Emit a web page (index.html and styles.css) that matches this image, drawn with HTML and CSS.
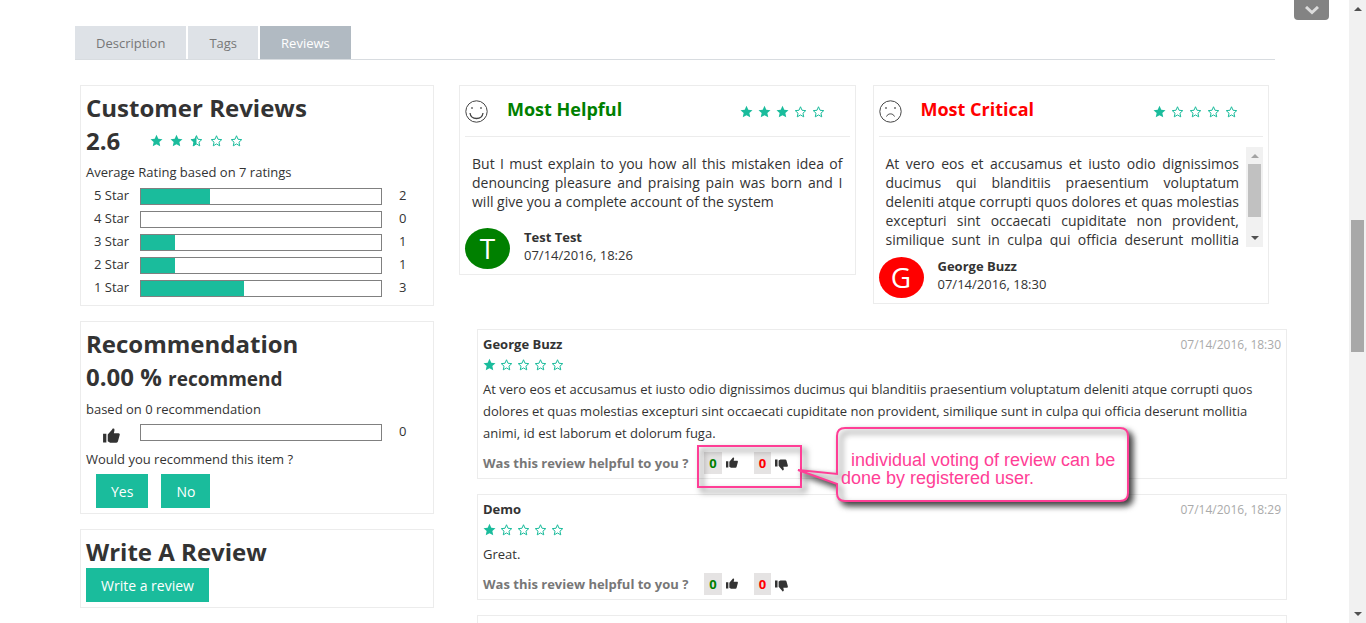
FILE: index.html
```html
<!DOCTYPE html>
<html lang="en">
<head>
    <meta charset="UTF-8">
    <meta name="viewport" content="width=device-width, initial-scale=1.0">
    <title>Product Reviews</title>
    <link rel="stylesheet" href="styles.css">
</head>
<body>
    <!-- shared icons -->
    <svg class="sprite" aria-hidden="true">
        <symbol id="star" viewBox="0 0 26 25">
            <path fill="currentColor" d="M13 1l3.6 8 8.4.9-6.300 5.800 1.800 8.500L13 19.900l-7.500 4.300 1.800-8.500L1 9.900 9.400 9z"/>
        </symbol>
        <symbol id="star-o" viewBox="0 0 26 25">
            <path fill="none" stroke="currentColor" stroke-width="2" d="M13 3l3 7 7.500.800-5.600 5.100 1.600 7.300L13 19.400l-6.500 3.800 1.600-7.300-5.600-5.100L10 10z"/>
        </symbol>
        <symbol id="star-half" viewBox="0 0 26 25">
            <path fill="none" stroke="currentColor" stroke-width="2" d="M13 3l3 7 7.500.800-5.600 5.100 1.600 7.300L13 19.400l-6.500 3.800 1.600-7.300-5.600-5.100L10 10z"/>
            <path fill="currentColor" d="M13 1v18.900l-7.500 4.300 1.800-8.500L1 9.900 9.400 9z"/>
        </symbol>
        <symbol id="thumb" viewBox="0 0 18 16">
            <path fill="currentColor" d="M0 6h3.500v9.500H0zM5 7l4.500-5.200C10 1 10.300.3 11.300.6c.9.300 1 1.300.8 2.200L11.500 5.500H16.500c1 0 1.500.8 1.300 1.700l-1.900 7c-.2.900-.8 1.500-1.700 1.500H7.500L5 14.200z"/>
        </symbol>
    </svg>

    <main class="page">
        <button type="button" class="toggle" aria-label="Expand">
            <svg viewBox="0 0 14 9"><path d="M1 1l6 5.500L13 1" fill="none" stroke="#dcdcdc" stroke-width="3"/></svg>
        </button>

        <nav class="tabs">
            <a href="#description">Description</a>
            <a href="#tags">Tags</a>
            <a href="#reviews" class="active">Reviews</a>
        </nav>

        <div class="reviews" id="reviews">
            <aside class="summary">
                <section class="card">
                    <h2>Customer Reviews</h2>
                    <div class="average">
                        <strong class="score">2.6</strong>
                        <span class="stars wide">
                            <svg><use href="#star"/></svg>
                            <svg><use href="#star"/></svg>
                            <svg><use href="#star-half"/></svg>
                            <svg><use href="#star-o"/></svg>
                            <svg><use href="#star-o"/></svg>
                        </span>
                    </div>
                    <p>Average Rating based on 7 ratings</p>
                    <ul class="ratings">
                        <li><span class="label">5 Star</span><span class="bar"><span class="fill" style="width: 28.6%"></span></span><span class="count">2</span></li>
                        <li><span class="label">4 Star</span><span class="bar"><span class="fill" style="width: 0%"></span></span><span class="count">0</span></li>
                        <li><span class="label">3 Star</span><span class="bar"><span class="fill" style="width: 14.3%"></span></span><span class="count">1</span></li>
                        <li><span class="label">2 Star</span><span class="bar"><span class="fill" style="width: 14.3%"></span></span><span class="count">1</span></li>
                        <li><span class="label">1 Star</span><span class="bar"><span class="fill" style="width: 42.9%"></span></span><span class="count">3</span></li>
                    </ul>
                </section>

                <section class="card recommendation">
                    <h2>Recommendation</h2>
                    <div class="average">
                        <strong class="score">0.00 % <small>recommend</small></strong>
                    </div>
                    <p>based on 0 recommendation</p>
                    <ul class="ratings">
                        <li><span class="label"><svg class="thumb-big"><use href="#thumb"/></svg></span><span class="bar"></span><span class="count">0</span></li>
                    </ul>
                    <p>Would you recommend this item ?</p>
                    <div class="choices">
                        <button type="button" class="btn">Yes</button>
                        <button type="button" class="btn">No</button>
                    </div>
                </section>

                <section class="card">
                    <h2>Write A Review</h2>
                    <button type="button" class="btn">Write a review</button>
                </section>
            </aside>

            <div class="content">
                <div class="highlights">
                    <section class="card helpful">
                        <header>
                            <svg class="face" viewBox="0 0 23 23" fill="none" stroke="#444">
                                <circle cx="11.500" cy="11.500" r="10.700"/>
                                <path d="M5 13c1 7.300 12 7.300 13 0" stroke-width="1.300"/>
                                <circle cx="7" cy="8" r=".5"/><circle cx="16" cy="8" r=".5"/>
                            </svg>
                            <h3>Most Helpful</h3>
                            <span class="stars">
                                <svg><use href="#star"/></svg>
                                <svg><use href="#star"/></svg>
                                <svg><use href="#star"/></svg>
                                <svg><use href="#star-o"/></svg>
                                <svg><use href="#star-o"/></svg>
                            </span>
                        </header>
                        <div class="quote">
                            <p>But I must explain to you how all this mistaken idea of denouncing pleasure and praising pain was born and I will give you a complete account of the system</p>
                        </div>
                        <footer>
                            <span class="avatar">T</span>
                            <div><strong>Test Test</strong><br>07/14/2016, 18:26</div>
                        </footer>
                    </section>

                    <section class="card critical">
                        <header>
                            <svg class="face" viewBox="0 0 23 23" fill="none" stroke="#444">
                                <circle cx="11.500" cy="11.500" r="10.700"/>
                                <path d="M7.500 16.500c1.500-3.500 6.500-3.500 8 0"/>
                                <circle cx="7" cy="8" r=".5"/><circle cx="16" cy="8" r=".5"/>
                            </svg>
                            <h3>Most Critical</h3>
                            <span class="stars">
                                <svg><use href="#star"/></svg>
                                <svg><use href="#star-o"/></svg>
                                <svg><use href="#star-o"/></svg>
                                <svg><use href="#star-o"/></svg>
                                <svg><use href="#star-o"/></svg>
                            </span>
                        </header>
                        <div class="quote">
                            <p>At vero eos et accusamus et iusto odio dignissimos ducimus qui blanditiis praesentium voluptatum deleniti atque corrupti quos dolores et quas molestias excepturi sint occaecati cupiditate non provident, similique sunt in culpa qui officia deserunt mollitia animi, id est laborum et dolorum fuga.</p>
                            <div class="scrollbar">
                                <svg class="arrow faded" viewBox="0 0 8 4"><path d="M0 4l4-4 4 4z"/></svg>
                                <span class="track"><span class="thumb"></span></span>
                                <svg class="arrow" viewBox="0 0 8 4"><path d="M0 0l4 4 4-4z"/></svg>
                            </div>
                        </div>
                        <footer>
                            <span class="avatar">G</span>
                            <div><strong>George Buzz</strong><br>07/14/2016, 18:30</div>
                        </footer>
                    </section>
                </div>

                <div class="list">
                    <article class="card review">
                        <header><strong>George Buzz</strong><time>07/14/2016, 18:30</time></header>
                        <span class="stars">
                            <svg><use href="#star"/></svg>
                            <svg><use href="#star-o"/></svg>
                            <svg><use href="#star-o"/></svg>
                            <svg><use href="#star-o"/></svg>
                            <svg><use href="#star-o"/></svg>
                        </span>
                        <p>At vero eos et accusamus et iusto odio dignissimos ducimus qui blanditiis praesentium voluptatum deleniti atque corrupti quos dolores et quas molestias excepturi sint occaecati cupiditate non provident, similique sunt in culpa qui officia deserunt mollitia animi, id est laborum et dolorum fuga.</p>
                        <div class="votes">
                            <span>Was this review helpful to you ?</span>
                            <span class="vote up">0</span>
                            <button type="button" aria-label="Helpful"><svg><use href="#thumb"/></svg></button>
                            <span class="vote down">0</span>
                            <button type="button" class="flip" aria-label="Not helpful"><svg><use href="#thumb"/></svg></button>
                        </div>
                        <div class="note">
                            <svg viewBox="0 0 450 90">
                                <rect class="line" x="6" y="24" width="103" height="41"/>
                                <path class="bubble" d="M153 6H428q8 0 8 8V71q0 8-8 8H153q-8 0-8-8V62L106 48l39 4V14q0-8 8-8z"/>
                                <path class="line" d="M153 6H428q8 0 8 8V71q0 8-8 8H153q-8 0-8-8V62L106 48l39 4V14q0-8 8-8z"/>
                            </svg>
                            <p>individual voting of review can be done by registered user.</p>
                        </div>
                    </article>

                    <article class="card review">
                        <header><strong>Demo</strong><time>07/14/2016, 18:29</time></header>
                        <span class="stars">
                            <svg><use href="#star"/></svg>
                            <svg><use href="#star-o"/></svg>
                            <svg><use href="#star-o"/></svg>
                            <svg><use href="#star-o"/></svg>
                            <svg><use href="#star-o"/></svg>
                        </span>
                        <p>Great.</p>
                        <div class="votes">
                            <span>Was this review helpful to you ?</span>
                            <span class="vote up">0</span>
                            <button type="button" aria-label="Helpful"><svg><use href="#thumb"/></svg></button>
                            <span class="vote down">0</span>
                            <button type="button" class="flip" aria-label="Not helpful"><svg><use href="#thumb"/></svg></button>
                        </div>
                    </article>

                    <article class="card review"></article>
                </div>
            </div>
        </div>
    </main>

    <div class="scrollbar main-scroll">
        <svg class="arrow" viewBox="0 0 8 4"><path d="M0 4l4-4 4 4z"/></svg>
        <span class="track"><span class="thumb"></span></span>
        <svg class="arrow" viewBox="0 0 8 4"><path d="M0 0l4 4 4-4z"/></svg>
    </div>
</body>
</html>
```
FILE: styles.css
```css
* {
    margin: 0;
    padding: 0;
    box-sizing: border-box;
}
body {
    font-family: 'Open Sans', sans-serif;
    font-size: 13px;
    line-height: 20px;
    color: #333;
    background: #fff;
    height: 100vh;
    display: flex;
    overflow: hidden;
}
svg {
    display: block;
}
button {
    border: none;
    font-family: inherit;
    cursor: pointer;
}
.sprite {
    position: absolute;
    width: 0;
    height: 0;
}
.page {
    flex: 1;
    min-width: 0;
    position: relative;
    padding: 26px 74px 0 75px;
}
.toggle {
    position: absolute;
    top: 0;
    right: 20px;
    width: 35px;
    height: 20px;
    display: flex;
    justify-content: center;
    align-items: center;
    background: #838383;
    border-radius: 0 0 4px 4px;
}
.toggle svg {
    width: 14px;
    height: 9px;
}

/* tabs */
.tabs {
    display: flex;
    gap: 2px;
    border-bottom: 1px solid #d8dce0;
}
.tabs a {
    padding: 1px 21px 0;
    line-height: 32px;
    color: #777;
    background: #dee2e7;
    text-decoration: none;
}
.tabs a.active {
    color: #fff;
    background: #b1bac2;
}

/* columns */
.reviews {
    display: grid;
    grid-template-columns: 354fr 828fr;
    gap: 25px;
    margin: 25px -12px 0 5px;
    align-items: start;
}
.summary {
    display: grid;
    gap: 15px;
}
.card {
    border: 1px solid #ececec;
    padding: 5px;
}
h2, .score {
    font-size: 24px;
    font-weight: 700;
    line-height: 33px;
}
.score small {
    font-size: 19px;
}

/* left column */
.average {
    display: flex;
    align-items: center;
    gap: 30px;
    margin-bottom: 5px;
}
.ratings {
    list-style: none;
    padding-top: 3px;
}
.recommendation .average {
    margin-bottom: 3px;
}
.recommendation .ratings {
    padding: 2px 0 5px;
}
.ratings li {
    display: grid;
    grid-template-columns: 54px 242px 1fr;
    height: 23px;
}
.label {
    padding-left: 8px;
}
.bar {
    height: 17px;
    margin-top: 3px;
    border: 1px solid #808080;
}
.fill {
    display: block;
    height: 100%;
    background: #1abc9c;
}
.count {
    padding-left: 17px;
}
.thumb-big {
    width: 17px;
    height: 15px;
    margin: 7px 0 0 9px;
}
.btn {
    height: 34px;
    padding: 0 15px;
    font-size: 14px;
    color: #fff;
    background: #1abc9c;
}
.choices {
    display: flex;
    gap: 13px;
    padding: 5px 10px 0;
}

/* stars */
.stars {
    display: flex;
    gap: 5px;
    color: #1abc9c;
}
.stars.wide {
    gap: 7px;
}
.stars svg {
    width: 13px;
    height: 13px;
}

/* most helpful / most critical */
.highlights {
    display: grid;
    grid-template-columns: 1fr 1fr;
    gap: 17px;
    align-items: start;
    margin-right: 18px;
}
.highlights header {
    display: flex;
    align-items: center;
    height: 46px;
    padding-bottom: 5px;
    border-bottom: 1px solid #ececec;
}
.highlights .stars {
    margin: 0 25px 0 auto;
}
.face {
    width: 23px;
    height: 23px;
    margin-right: 19px;
}
h3 {
    font-size: 18px;
    font-weight: 700;
    padding-bottom: 4px;
}
.helpful h3 {
    color: #008000;
}
.critical h3 {
    color: #f00;
}
.quote {
    display: flex;
    max-height: 100px;
    margin: 10px 0;
}
.quote p {
    flex: 1;
    padding: 7px;
    font-size: 14px;
    line-height: 19px;
    text-align: justify;
    overflow-y: auto;
    scrollbar-width: none;
}
.highlights footer {
    display: flex;
    gap: 14px;
    line-height: 18px;
}
.avatar {
    width: 45px;
    height: 41px;
    border-radius: 50%;
    font-size: 28px;
    line-height: 41px;
    text-align: center;
    color: #fff;
    background: #008000;
}
.critical .avatar {
    background: #f00;
}
strong {
    font-weight: 700;
}

/* review list */
.list {
    display: grid;
    gap: 15px;
    padding: 25px 0 0 18px;
}
.review {
    position: relative;
    padding-bottom: 4px;
    line-height: 22px;
}
.review header {
    display: flex;
    justify-content: space-between;
    align-items: baseline;
    height: 18px;
    line-height: 18px;
}
.review time {
    font-size: 12px;
    color: #aaa;
}
.review .stars {
    gap: 4px;
    margin: 5px 0 7px;
}
.votes {
    display: flex;
    height: 22px;
    margin-top: 8px;
    font-weight: 700;
    color: #777;
}
.vote {
    margin-left: 16px;
    padding: 0 5px;
    background: #e5e3e3;
}
.vote.up {
    color: #008000;
}
.vote.down {
    color: #f00;
}
.votes button {
    display: flex;
    align-items: flex-start;
    padding: 5px 0 0 4px;
    background: none;
    color: #333;
}
.votes button svg {
    width: 12px;
    height: 11px;
}
.votes .flip {
    padding-top: 7px;
}
.votes .flip svg {
    width: 13px;
    height: 12px;
    transform: scaleY(-1);
}

/* callout over the first review */
.note {
    position: absolute;
    left: 214px;
    top: 92px;
    z-index: 1;
    width: 450px;
    height: 90px;
    pointer-events: none;
}
.note svg {
    position: absolute;
    width: 450px;
    height: 90px;
    overflow: visible;
}
.note .line {
    fill: none;
    stroke: #ff3e96;
    stroke-width: 2;
    filter: drop-shadow(4px 4px 3px rgba(0, 0, 0, 0.6));
}
.note .bubble {
    fill: #fff;
    filter: drop-shadow(4px 4px 3px rgba(0, 0, 0, 0.8));
}
.note p {
    position: relative;
    padding: 29px 15px 0 149px;
    font-family: 'Liberation Sans', Arial, sans-serif;
    font-size: 18px;
    line-height: 18px;
    text-indent: 10px;
    color: #ff3e96;
}

/* scrollbars */
.scrollbar {
    display: flex;
    flex-direction: column;
    align-items: center;
    width: 17px;
    padding: 7px 2px;
    background: #f1f1f1;
}
.scrollbar .arrow {
    width: 8px;
    height: 4px;
    fill: #505050;
}
.scrollbar .arrow.faded {
    fill: #a3a3a3;
}
.track {
    flex: 1;
    width: 100%;
    margin: 6px 0;
}
.thumb {
    display: block;
    width: 100%;
    height: 80%;
    background: #c1c1c1;
}
.main-scroll .track {
    display: flex;
    flex-direction: column;
}
.main-scroll .track::before {
    content: "";
    height: 34.5%;
}
.main-scroll .thumb {
    height: 22.3%;
    background: #a8a8a8;
}
```
